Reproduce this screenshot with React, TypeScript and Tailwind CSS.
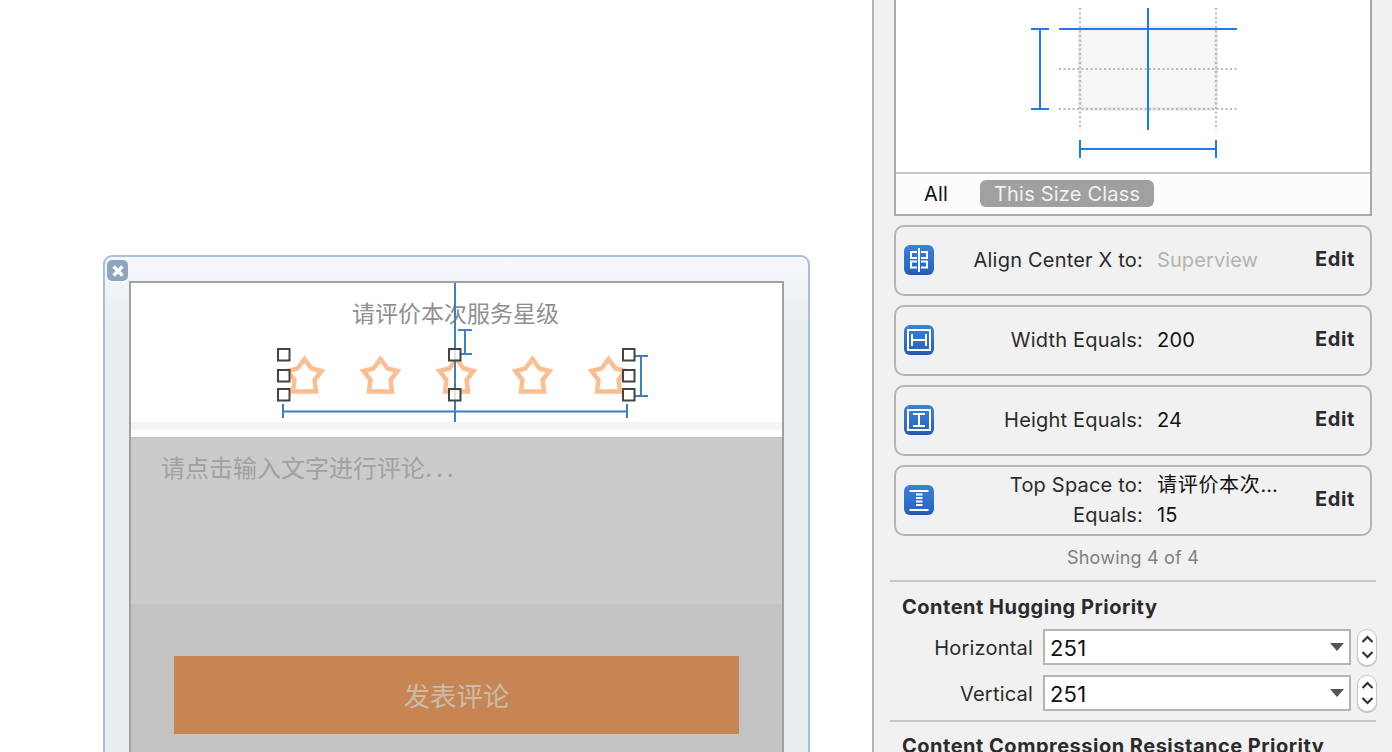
import React from "react";

const sans = "font-['Inter','Noto_Sans_CJK_SC',sans-serif]";

function Star() {
  return (
    <svg width="41" height="40" viewBox="0 0 41 40" className="blur-[0.7px]">
      <path
        d="M20.5 4 L27.5 13.5 L37.5 16 L30.5 25 L32 36.5 L9 36.5 L10.5 25 L3.5 16 L13.5 13.5 Z"
        fill="none"
        stroke="#fbbd92"
        strokeWidth="4.5"
        strokeLinejoin="miter"
      />
    </svg>
  );
}

function Handle({ x, y }: { x: number; y: number }) {
  return <rect x={x} y={y} width="11.5" height="11.5" fill="#fff" fillOpacity="0.8" stroke="#444" strokeWidth="2" />;
}

function Constraints() {
  const c = "#3d80c0";
  return (
    <svg className="absolute left-0 top-0" width="652" height="160" viewBox="131 283 652 160">
      <g stroke={c} strokeWidth="2" fill="none">
        <path d="M455 283V422" />
        <path d="M283 411.5H627M283 404V418M627 404V418" />
        <path d="M465 330V354M458 330H472M461 354H472" />
        <path d="M641 356V396M635 356H648M635 396H648" />
      </g>
      <Handle x={278} y={349} />
      <Handle x={278} y={370} />
      <Handle x={278} y={389} />
      <Handle x={449} y={349} />
      <Handle x={449} y={389} />
      <Handle x={623} y={349} />
      <Handle x={623} y={370} />
      <Handle x={623} y={389} />
    </svg>
  );
}

function CloseBadge() {
  return (
    <div className="absolute left-[2px] top-[3px] flex h-[21px] w-[21px] items-center justify-center rounded-[5px] bg-[#8fa5bd] shadow-[0_1px_1px_#ffffff]">
      <svg width="16" height="16" viewBox="0 0 16 16" className="blur-[0.3px]">
        <path d="M3.5 3.5L12.5 12.5M12.5 3.5L3.5 12.5" stroke="#fff" strokeWidth="3.4" />
      </svg>
    </div>
  );
}

function Canvas() {
  return (
    <div className={`h-[752px] w-[872px] shrink-0 overflow-hidden bg-white pl-[103px] pt-[255px] ${sans}`}>
      <div className="relative h-[560px] w-[707px] rounded-t-[9px] border-2 border-[#a8bde2] bg-gradient-to-b from-[#f6f8fa] to-[#e8edf2] to-[70px] pl-[24px] pr-[24px] pt-[24px]">
        <CloseBadge />
        <div className="relative h-[520px] border-2 border-[#a0a0a0] bg-white">
          <div className="flex h-[139px] flex-col items-center pt-[16px]">
            <div className="-translate-x-px text-[23px] leading-[30px] text-[#8f8f8f]">请评价本次服务星级</div>
            <div className="mt-[26px] flex gap-[35px]">
              <Star />
              <Star />
              <Star />
              <Star />
              <Star />
            </div>
          </div>
          <div className="h-[8px] bg-[#f4f4f4]" />
          <div className="h-[7px] bg-white" />
          <div className="h-[167px] border-t border-[#bdbdbd] bg-[#cbcbcb] pl-[30px] pt-[15px] text-[24px] leading-[32px] text-[#a1a1a1]">
            请点击输入文字进行评论<span className="tracking-[4px]">...</span>
          </div>
          <div className="h-[199px] bg-[#c3c3c3] px-[43px] pt-[52px]">
            <div className="flex h-[78px] items-center justify-center bg-[#c68552] pt-[3px] text-[26.5px] text-[#c9bcab]">发表评论</div>
          </div>
          <Constraints />
        </div>
      </div>
    </div>
  );
}

function Diagram() {
  const b = "#1a7bf5";
  const d = "#b9b9b9";
  return (
    <svg width="474" height="172" viewBox="896 0 474 172" className="block">
      <rect x="1080" y="28" width="136" height="81" rx="4" fill="#f6f6f6" stroke="#ececec" strokeWidth="4" />
      <g stroke={d} strokeWidth="2" strokeDasharray="2 2.5" fill="none">
        <path d="M1080 8V130M1216 8V130M1059 69H1237M1059 109H1237" />
      </g>
      <g stroke={b} strokeWidth="2" fill="none">
        <path d="M1059 29H1237M1148 8V130" />
        <path d="M1040 29V109M1031 29H1049M1031 109H1049" />
        <path d="M1080 149H1216M1080 140V158M1216 140V158" />
      </g>
    </svg>
  );
}

function IconBase({ id, children }: { id: string; children: React.ReactNode }) {
  return (
    <svg width="30" height="30" viewBox="0 0 30 30" className="shrink-0">
      <defs>
        <linearGradient id={id} x1="0" y1="0" x2="0" y2="1">
          <stop offset="0" stopColor="#3b80dc" />
          <stop offset="0.85" stopColor="#2866c2" />
          <stop offset="1" stopColor="#1f55a6" />
        </linearGradient>
      </defs>
      <rect x="0" y="0" width="30" height="30" rx="6" fill={`url(#${id})`} />
      <g stroke="#fff" strokeWidth="2" fill="none">
        {children}
      </g>
    </svg>
  );
}

const icons: Record<string, React.ReactNode> = {
  align: <path d="M15 3V27M13 7H7V13H13M13 16.5H7V22.5H13M17 7H23V13H17M17 16.5H23V22.5H17" />,
  width: <path d="M4 5H26V25H4ZM8 9V21M22 9V21M8 15H22" />,
  height: <path d="M4 5H26V25H4ZM9 9H21M9 21H21M15 9V21" />,
  top: <path d="M5.5 6H24.5M5.5 25H24.5M12 9.5H18.5M12 13H18.5M12 16.5H18.5M12 20H18.5" />,
};

function Row({ icon, label, value, muted, two }: { icon: string; label: string; value: string; muted?: boolean; two?: boolean }) {
  return (
    <div className="flex h-[71px] items-center rounded-[10px] border-2 border-[#b5b5b5] pb-[2px] pl-[8px] pr-[15px]">
      <IconBase id={`g-${icon}`}>{icons[icon]}</IconBase>
      {two ? (
        <div className="flex flex-1 flex-col gap-[6px] text-[20px] leading-[24px]">
          <div className="flex">
            <span className="w-[209px] text-right text-[#2b2b2b]">Top Space to:</span>
            <span className="ml-[14px] tracking-[0.7px] text-[#111]">{value}</span>
          </div>
          <div className="flex">
            <span className="w-[209px] text-right text-[#2b2b2b]">Equals:</span>
            <span className="ml-[14px] text-[#111]">15</span>
          </div>
        </div>
      ) : (
        <div className="flex flex-1 text-[20px] leading-[24px]">
          <span className="w-[209px] text-right text-[#2b2b2b]">{label}</span>
          <span className={`ml-[14px] ${muted ? "tracking-[0.1px] text-[#b4b4b4]" : "text-[#111]"}`}>{value}</span>
        </div>
      )}
      <span className="mb-[2px] text-[20px] font-bold leading-[24px] tracking-[0.6px] text-[#2b2b2b]">Edit</span>
    </div>
  );
}

function Priority({ label }: { label: string }) {
  return (
    <div className="flex h-[36px] items-center">
      <span className="w-[131px] pt-[2px] text-right text-[20px] text-[#2b2b2b]">{label}</span>
      <div className="ml-[10px] flex h-[36px] w-[308px] items-center justify-between border-2 border-[#b5b5b5] bg-white pl-[5px] pr-[5px] text-[22px] text-[#111]">
        <span className="pt-[2px]">251</span>
        <svg width="14" height="8" viewBox="0 0 14 8">
          <path d="M0 0H14L7 8Z" fill="#555" />
        </svg>
      </div>
      <div className="ml-[6px] flex h-[37px] w-[20px] items-center justify-center rounded-[10px] border border-[#c8c8c8] bg-white shadow-[0_1px_1px_#bbb]">
        <svg width="13" height="28" viewBox="0 0 13 28">
          <path d="M1.5 9L6.5 4L11.5 9M1.5 19L6.5 24L11.5 19" fill="none" stroke="#333" strokeWidth="2.2" />
        </svg>
      </div>
    </div>
  );
}

function Panel() {
  return (
    <div className={`h-[752px] flex-1 overflow-hidden border-l-2 border-[#b4b4b4] bg-[#f1f1f1] tracking-[0.2px] ${sans}`}>
      <div className="ml-[20px] w-[478px] border-x-2 border-b-2 border-[#a9a9a9] bg-white">
        <Diagram />
        <div className="flex h-[42px] items-center border-t-2 border-[#c8c8c8] bg-[#fcfcfc] pb-[1px] pl-[28px] text-[20px]">
          <span className="text-[#111]">All</span>
          <span className="ml-[32px] flex h-[27px] w-[174px] items-center justify-center rounded-[6px] bg-[#a0a0a0] text-[#f1f1f1]">This Size Class</span>
        </div>
      </div>
      <div className="ml-[20px] mt-[9px] flex w-[478px] flex-col gap-[9px]">
        <Row icon="align" label="Align Center X to:" value="Superview" muted />
        <Row icon="width" label="Width Equals:" value="200" />
        <Row icon="height" label="Height Equals:" value="24" />
        <Row icon="top" label="" value="请评价本次…" two />
      </div>
      <div className="ml-[20px] mt-[10px] w-[478px] text-center text-[18px] leading-[24px] text-[#808080]">Showing 4 of 4</div>
      <div className="ml-[16px] mt-[10px] h-[2px] w-[486px] bg-[#c8c8c8]" />
      <div className="ml-[28px] mt-[12px] text-[20px] font-bold leading-[26px] tracking-[0.5px] text-[#2b2b2b]">Content Hugging Priority</div>
      <div className="ml-[28px] mt-[9px] flex flex-col gap-[10px]">
        <Priority label="Horizontal" />
        <Priority label="Vertical" />
      </div>
      <div className="ml-[16px] mt-[9px] h-[2px] w-[486px] bg-[#c8c8c8]" />
      <div className="ml-[28px] mt-[11px] whitespace-nowrap text-[20px] font-bold leading-[26px] tracking-[0.5px] text-[#2b2b2b]">Content Compression Resistance Priority</div>
    </div>
  );
}

export default function App() {
  return (
    <div className="flex h-[752px] w-[1392px] overflow-hidden bg-white">
      <Canvas />
      <Panel />
    </div>
  );
}
